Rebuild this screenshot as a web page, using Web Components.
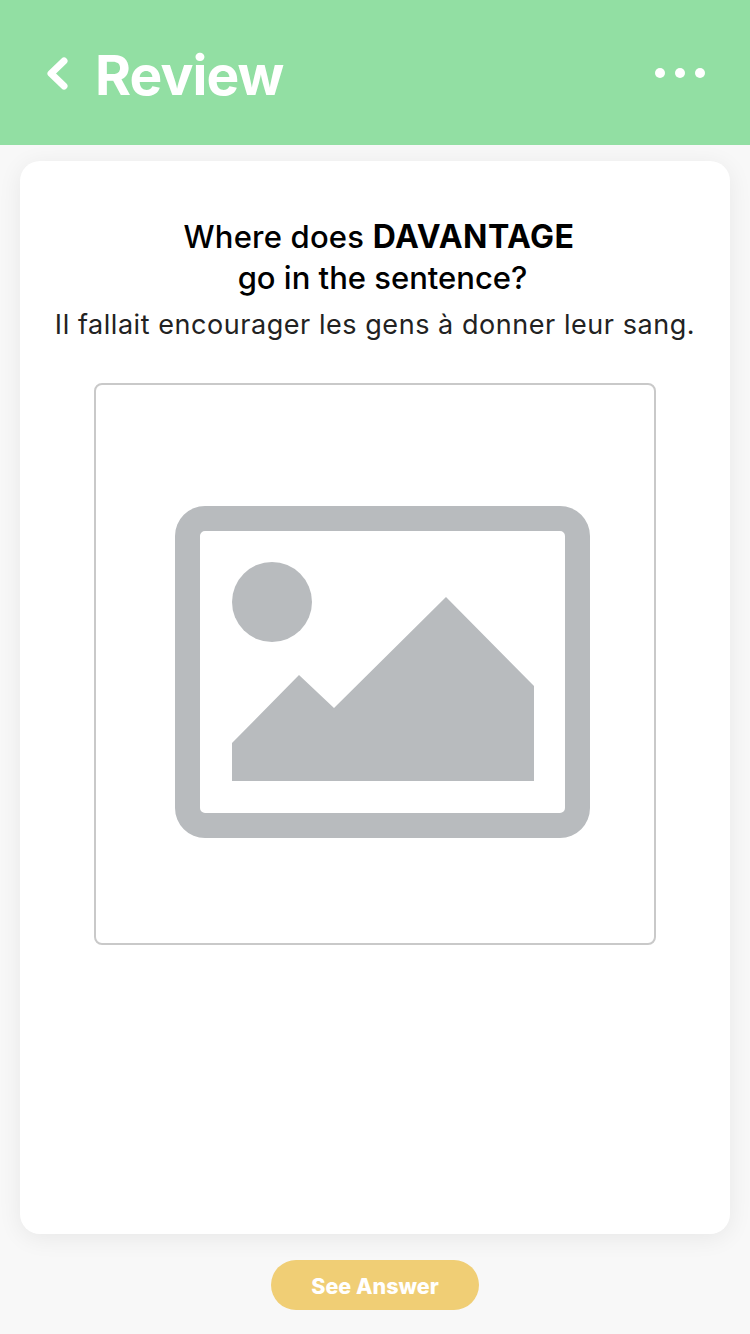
<!doctype html>
<html lang="en"><head><meta charset="utf-8"><title>Review</title>
<style>
html,body{margin:0;padding:0;background:#f8f8f8}
body{width:750px;height:1334px;overflow:hidden;font-family:Inter,Lato,sans-serif}
.word{font-size:32px;font-weight:700;letter-spacing:.5px}
.second{display:inline-block;margin-left:7px;letter-spacing:0}
</style></head><body>
<review-screen>
  <app-header title="Review"></app-header>
  <question-card>
    <span slot="heading">Where does <span class="word">DAVANTAGE</span><br><span class="second">go in the sentence?</span></span>
    <span slot="sentence">Il fallait encourager les gens à donner leur sang.</span>
    <image-placeholder></image-placeholder>
  </question-card>
  <pill-button>See Answer</pill-button>
</review-screen>
<script>
function def(name, html){
  customElements.define(name, class extends HTMLElement{
    constructor(){super();this.attachShadow({mode:'open'}).innerHTML=html;}
    connectedCallback(){
      const t=this.shadowRoot.querySelector('[data-title]');
      if(t) t.textContent=this.getAttribute('title')||'';
    }
  });
}
def('review-screen',`<style>:host{display:flex;flex-direction:column;align-items:stretch;width:750px;height:1334px;background:#f8f8f8}</style><slot></slot>`);
def('app-header',`<style>
:host{display:flex;align-items:center;height:145px;flex:none;background:#92dfa3;color:#fff;padding:0 44px 0 44px;box-sizing:border-box}
.back{display:block;width:28px;height:42px;flex:none}
h1{margin:0 0 0 23px;font:700 55px/1 Inter,sans-serif;letter-spacing:-.9px;flex:1;padding-top:5px}
.more{display:block;width:52px;height:12px;flex:none}
</style>
<svg class="back" viewBox="0 0 28 42" aria-hidden="true"><path d="M20 9 7 21.500 20 34" fill="none" stroke="#fff" stroke-width="7" stroke-linecap="round" stroke-linejoin="round"/></svg>
<h1 data-title></h1>
<svg class="more" viewBox="0 0 52 12" aria-hidden="true"><circle cx="6" cy="6" r="5" fill="#fff"/><circle cx="26" cy="6" r="5" fill="#fff"/><circle cx="46" cy="6" r="5" fill="#fff"/></svg>`);
def('question-card',`<style>
:host{display:flex;flex-direction:column;align-items:center;box-sizing:border-box;height:1073px;margin:16px 20px 0;background:#fff;border-radius:20px;box-shadow:0 4px 24px rgba(0,0,0,.07);padding-top:55px;flex:none}
.h{font:500 31px/41px Inter,sans-serif;color:#000;text-align:center;letter-spacing:.2px;padding-left:8px}
.s{font:400 27px/36px Inter,sans-serif;color:#222;text-align:center;margin-top:9px;letter-spacing:.55px;white-space:nowrap}
.i{margin-top:40px;display:block}
</style>
<div class="h"><slot name="heading"></slot></div>
<div class="s"><slot name="sentence"></slot></div>
<div class="i"><slot></slot></div>`);
def('image-placeholder',`<style>
:host{display:flex;align-items:center;justify-content:center;box-sizing:border-box;width:562px;height:562px;padding:16px 0 0 16px;border:2px solid #c9c9c9;border-radius:8px;background:#fff}
svg{display:block;width:416px;height:334px}
</style>
<svg viewBox="175 505 416 334" aria-hidden="true">
<path fill="#b8bbbe" fill-rule="evenodd" d="M205 506H560A30 30 0 0 1 590 536V808A30 30 0 0 1 560 838H205A30 30 0 0 1 175 808V536A30 30 0 0 1 205 506ZM205 531A5 5 0 0 0 200 536V808A5 5 0 0 0 205 813H560A5 5 0 0 0 565 808V536A5 5 0 0 0 560 531Z"/>
<circle cx="272" cy="602" r="40" fill="#b8bbbe"/>
<path fill="#b8bbbe" d="M232 743 299 675 334 708 446 597 534 686V781H232Z"/>
</svg>`);
def('pill-button',`<style>
:host{display:flex;align-items:center;justify-content:center;align-self:center;box-sizing:border-box;flex:none;width:208px;height:50px;margin-top:26px;padding-top:3px;border-radius:25px;background:#f0ce75;color:#fff;font:800 21.5px/1 Inter,sans-serif;letter-spacing:0}
</style><slot></slot>`);
</script>
</body></html>
